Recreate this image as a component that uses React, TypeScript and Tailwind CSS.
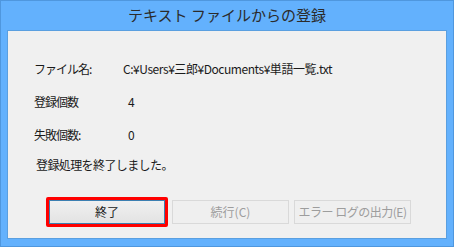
export default function App() {
  const font = { fontFamily: '"Noto Sans CJK JP", "Noto Sans", sans-serif' };
  return (
    <div
      className="flex h-[247px] w-[454px] flex-col border border-[#4f97de] bg-[#63b1fd] text-[#1a1a1a]"
      style={font}
    >
      <div className="flex h-[29px] shrink-0 items-center justify-center text-[15px] text-[#2b2b2b]">
        テキスト ファイルからの登録
      </div>
      <div className="mx-[6px] mb-[7px] flex flex-1 flex-col border border-[#5a9fe0] bg-[#f0f0f0] text-[12px]">
        <div className="mt-[30px] flex h-[16px] items-center pl-[26px]">
          <span className="w-[89px] tracking-[-1px]">ファイル名:</span>
          <span className="tracking-[-0.45px]">C:¥Users¥三郎¥Documents¥単語一覧.txt</span>
        </div>
        <div className="mt-[17px] flex h-[16px] items-center pl-[26px]">
          <span className="w-[94px] tracking-[-1px]">登録個数</span>
          <span>4</span>
        </div>
        <div className="mt-[17px] flex h-[16px] items-center pl-[26px]">
          <span className="w-[94px] tracking-[-1px]">失敗個数:</span>
          <span>0</span>
        </div>
        <div className="mt-[14px] flex h-[16px] items-center pl-[28px] tracking-[-0.6px]">
          登録処理を終了しました。
        </div>
        <div className="mt-auto mb-[11px] flex items-center pl-[38px]">
          <div className="rounded-[2px] border-[3px] border-[#ff0000]">
            <button className="flex h-[24px] w-[116px] items-center justify-center border border-[#3c7fb1] bg-gradient-to-b from-[#f0f0f0] to-[#e3e3e3] text-[12px] text-[#1a1a1a]">
              終了
            </button>
          </div>
          <button className="ml-[4px] flex h-[24px] w-[117px] items-center justify-center border border-[#d9d9d9] bg-[#efefef] text-[12px] text-[#9d9d9d]">
            続行(C)
          </button>
          <button className="ml-[5px] flex h-[24px] w-[117px] items-center justify-center border border-[#d9d9d9] bg-[#efefef] text-[12px] tracking-[-0.5px] text-[#9d9d9d]">
            エラー ログの出力(E)
          </button>
        </div>
      </div>
    </div>
  );
}
